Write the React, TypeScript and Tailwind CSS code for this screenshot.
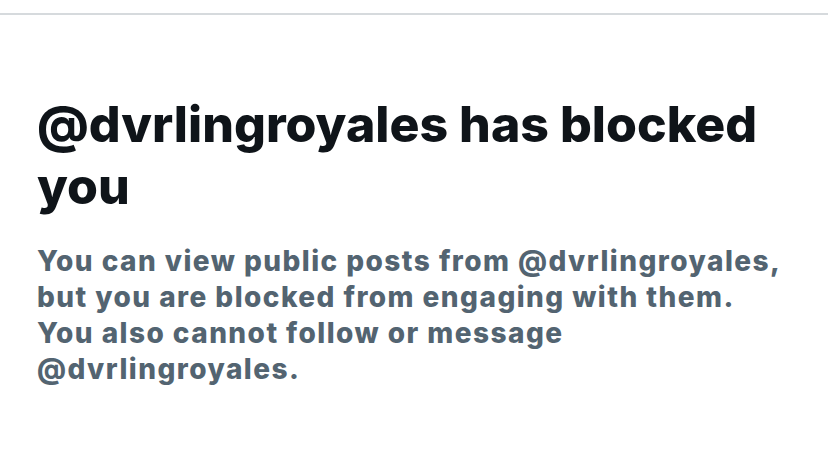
export default function App() {
  return (
    <div className="w-[828px] h-[468px] bg-white overflow-hidden" style={{ fontFamily: 'Inter, "Noto Sans", sans-serif' }}>
      <div className="h-[13px]" />
      <div className="h-[2px] bg-[#d6dadd]" />
      <div className="pl-[37px] pr-[30px] pt-[78px]">
        <h1 className="text-[50px] leading-[62px] font-extrabold text-[#0f1419] tracking-[0px]">
          @dvrlingroyales has blocked you
        </h1>
        <p className="mt-[26px] text-[28px] leading-[36px] font-extrabold text-[#536471] tracking-[1.45px]">
          You can view public posts from @dvrlingroyales,
          <br />
          but you are blocked from engaging with them.
          <br />
          You also cannot follow or message
          <br />
          @dvrlingroyales.
        </p>
      </div>
    </div>
  );
}
